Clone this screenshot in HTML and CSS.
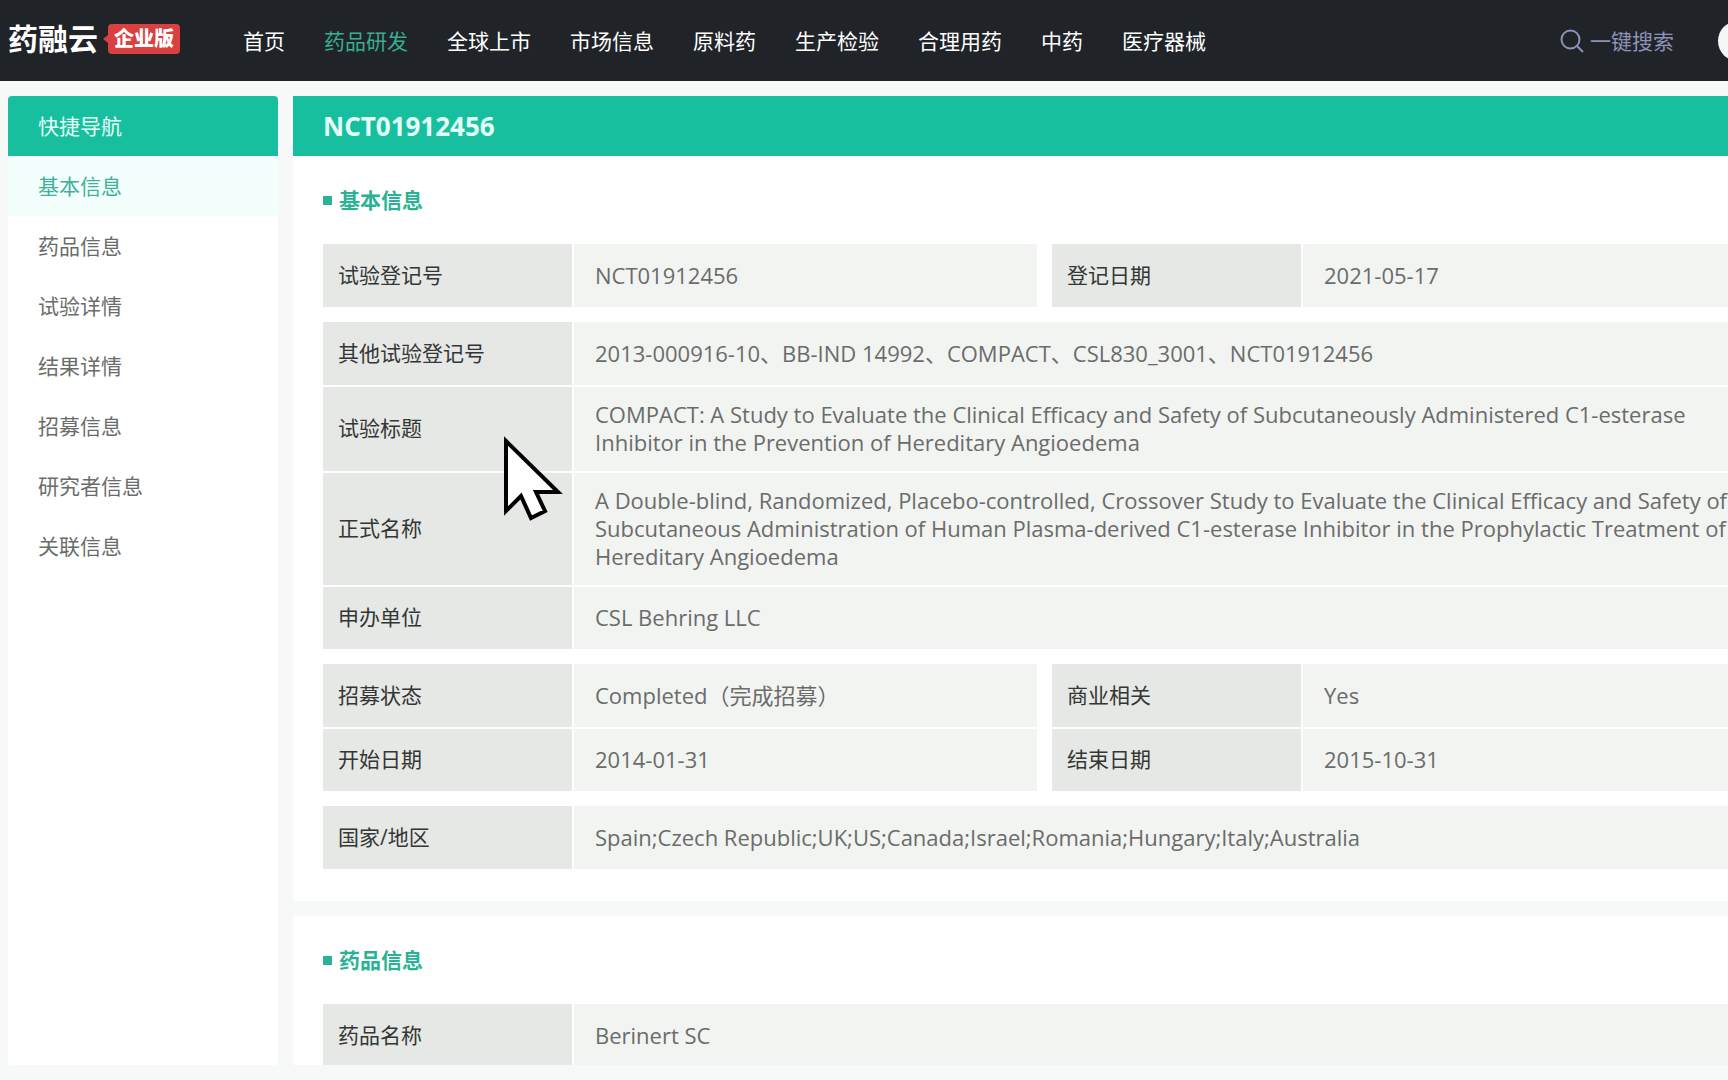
FILE: index.html
```html
<!DOCTYPE html>
<html lang="zh-CN">
<head>
<meta charset="utf-8">
<title>NCT01912456 - 药融云</title>
<link rel="stylesheet" href="styles.css">
</head>
<body>
<div class="page">
  <header class="topbar">
    <a class="logo" href="#"><span class="logo-name">药融云</span><span class="logo-badge">企业版</span></a>
    <nav class="menu">
      <a href="#">首页</a>
      <a class="current" href="#">药品研发</a>
      <a href="#">全球上市</a>
      <a href="#">市场信息</a>
      <a href="#">原料药</a>
      <a href="#">生产检验</a>
      <a href="#">合理用药</a>
      <a href="#">中药</a>
      <a href="#">医疗器械</a>
    </nav>
    <button class="search" type="button">
      <svg width="24" height="24" viewBox="0 0 24 24" fill="none" stroke="currentColor" stroke-width="2" aria-hidden="true"><circle cx="10.5" cy="10.5" r="9"/><path d="M17 17l6 6"/></svg>
      <span>一键搜索</span>
    </button>
    <button class="avatar" type="button" aria-label="用户"></button>
  </header>

  <div class="layout">
    <aside class="sidebar">
      <h2>快捷导航</h2>
      <nav>
        <a class="active" href="#basic">基本信息</a>
        <a href="#drug">药品信息</a>
        <a href="#">试验详情</a>
        <a href="#">结果详情</a>
        <a href="#">招募信息</a>
        <a href="#">研究者信息</a>
        <a href="#">关联信息</a>
      </nav>
    </aside>

    <main class="content">
      <section class="panel" id="basic">
        <h1>NCT01912456</h1>
        <div class="panel-body">
          <h3>基本信息</h3>
          <div class="tables">
            <div class="pair">
              <table><tr><th scope="row">试验登记号</th><td>NCT01912456</td></tr></table>
              <table><tr><th scope="row">登记日期</th><td>2021-05-17</td></tr></table>
            </div>
            <table>
              <tr><th scope="row">其他试验登记号</th><td>2013-000916-10、BB-IND 14992、COMPACT、CSL830_3001、NCT01912456</td></tr>
              <tr><th scope="row">试验标题</th><td>COMPACT: A Study to Evaluate the Clinical Efficacy and Safety of Subcutaneously Administered C1-esterase Inhibitor in the Prevention of Hereditary Angioedema</td></tr>
              <tr><th scope="row">正式名称</th><td>A Double-blind, Randomized, Placebo-controlled, Crossover Study to Evaluate the Clinical Efficacy and Safety of Subcutaneous Administration of Human Plasma-derived C1-esterase Inhibitor in the Prophylactic Treatment of Hereditary Angioedema</td></tr>
              <tr><th scope="row">申办单位</th><td>CSL Behring LLC</td></tr>
            </table>
            <div class="pair">
              <table>
                <tr><th scope="row">招募状态</th><td>Completed（完成招募）</td></tr>
                <tr><th scope="row">开始日期</th><td>2014-01-31</td></tr>
              </table>
              <table>
                <tr><th scope="row">商业相关</th><td>Yes</td></tr>
                <tr><th scope="row">结束日期</th><td>2015-10-31</td></tr>
              </table>
            </div>
            <table><tr><th scope="row">国家/地区</th><td>Spain;Czech Republic;UK;US;Canada;Israel;Romania;Hungary;Italy;Australia</td></tr></table>
          </div>
        </div>
      </section>
      <section class="panel" id="drug">
        <div class="panel-body">
          <h3>药品信息</h3>
          <div class="tables">
            <table><tr><th scope="row">药品名称</th><td>Berinert SC</td></tr></table>
          </div>
        </div>
      </section>
    </main>
  </div>

  <svg class="pointer" width="64" height="88" viewBox="0 0 64 88" aria-hidden="true"><path d="M4 6L56 57H34L43 76L29 83L19 61L4 76Z" fill="#fefffe" stroke="#000" stroke-width="4"/></svg>
</div>
</body>
</html>
```
FILE: styles.css
```css
* { box-sizing: border-box; }

body {
  margin: 0;
  overflow: hidden;
  background: #f7f8f8;
  color: #6a6c6a;
  font: 21px/28px "Open Sans", "Noto Sans CJK SC", sans-serif;
}

a { color: inherit; text-decoration: none; }

button {
  padding: 0;
  border: 0;
  background: none;
  font: inherit;
  cursor: pointer;
}

h1, h2, h3 { margin: 0; }

.page {
  position: relative;
  display: flex;
  flex-direction: column;
  min-width: 1804px;
  height: 100vh;
}

/* top bar */
.topbar {
  display: flex;
  align-items: center;
  flex: none;
  height: 81px;
  padding: 0 46px 0 8px;
  background: #202428;
  color: #fff;
}

.logo {
  display: flex;
  align-items: center;
  gap: 10px;
  width: 235px;
  padding-bottom: 4px;
}

.logo-name {
  font-size: 30px;
  font-weight: 700;
}

.logo-badge {
  position: relative;
  padding: 0 6px;
  border-radius: 4px;
  background: #d9403f;
  font-size: 20px;
  font-weight: 900;
  line-height: 30px;
}

.logo-badge::before {
  content: "";
  position: absolute;
  left: -5px;
  top: 11px;
  border: solid transparent;
  border-width: 4px 5px 4px 0;
  border-right-color: #d9403f;
}

.menu { display: flex; gap: 39px; }
.menu .current { color: #38ad94; }

.search {
  display: flex;
  align-items: center;
  gap: 6px;
  margin-left: auto;
  color: #8f92b8;
}

.avatar {
  width: 40px;
  height: 40px;
  margin-left: 44px;
  border-radius: 50%;
  background: #f4f6f8;
}

/* columns */
.layout {
  display: flex;
  flex: 1;
  gap: 15px;
  min-height: 0;
  padding: 15px 8px;
}

.sidebar {
  flex: none;
  width: 270px;
  border-radius: 4px;
  overflow: hidden;
  background: #fefffe;
}

.sidebar h2,
.sidebar a {
  display: block;
  padding: 0 30px;
  font-size: 21px;
  font-weight: 400;
  line-height: 60px;
}

.sidebar h2 { background: #18bf9e; color: #e4fffa; }
.sidebar .active { background: #f3fffd; color: #3db19b; }

.content {
  display: flex;
  flex: 1;
  flex-direction: column;
  gap: 15px;
  overflow: hidden;
}

.panel {
  flex: none;
  background: #fefffe;
}

.panel h1 {
  padding: 0 30px;
  background: #18bf9e;
  color: #e4fffa;
  font-size: 26px;
  line-height: 60px;
}

.panel-body { padding: 30px 30px 32px; }

.panel h3 {
  display: flex;
  align-items: center;
  gap: 7px;
  margin-bottom: 30px;
  color: #29b394;
  font-size: 21px;
  font-weight: 700;
}

.panel h3::before {
  content: "";
  width: 9px;
  height: 9px;
  background: #29b394;
}

/* field tables */
.tables { display: grid; gap: 15px; }

.pair {
  display: grid;
  grid-template-columns: 1fr 1fr;
  gap: 15px;
}

table {
  width: 100%;
  border-spacing: 0;
  table-layout: fixed;
}

th,
td {
  height: 63px;
  background: #f2f4f2;
  background-clip: padding-box;
  text-align: left;
  vertical-align: middle;
}

th {
  width: 249px;
  padding: 13px 15px 15px;
  background-color: #e6e8e6;
  color: #343634;
  font-weight: 400;
}

td {
  padding: 13px 21px 15px;
  border-left: 2px solid #fefffe;
  font-size: 22px;
}

tr + tr > * {
  height: 64px;
  border-top: 2px solid #fefffe;
}

.pointer {
  position: absolute;
  left: 502px;
  top: 435px;
}
```
